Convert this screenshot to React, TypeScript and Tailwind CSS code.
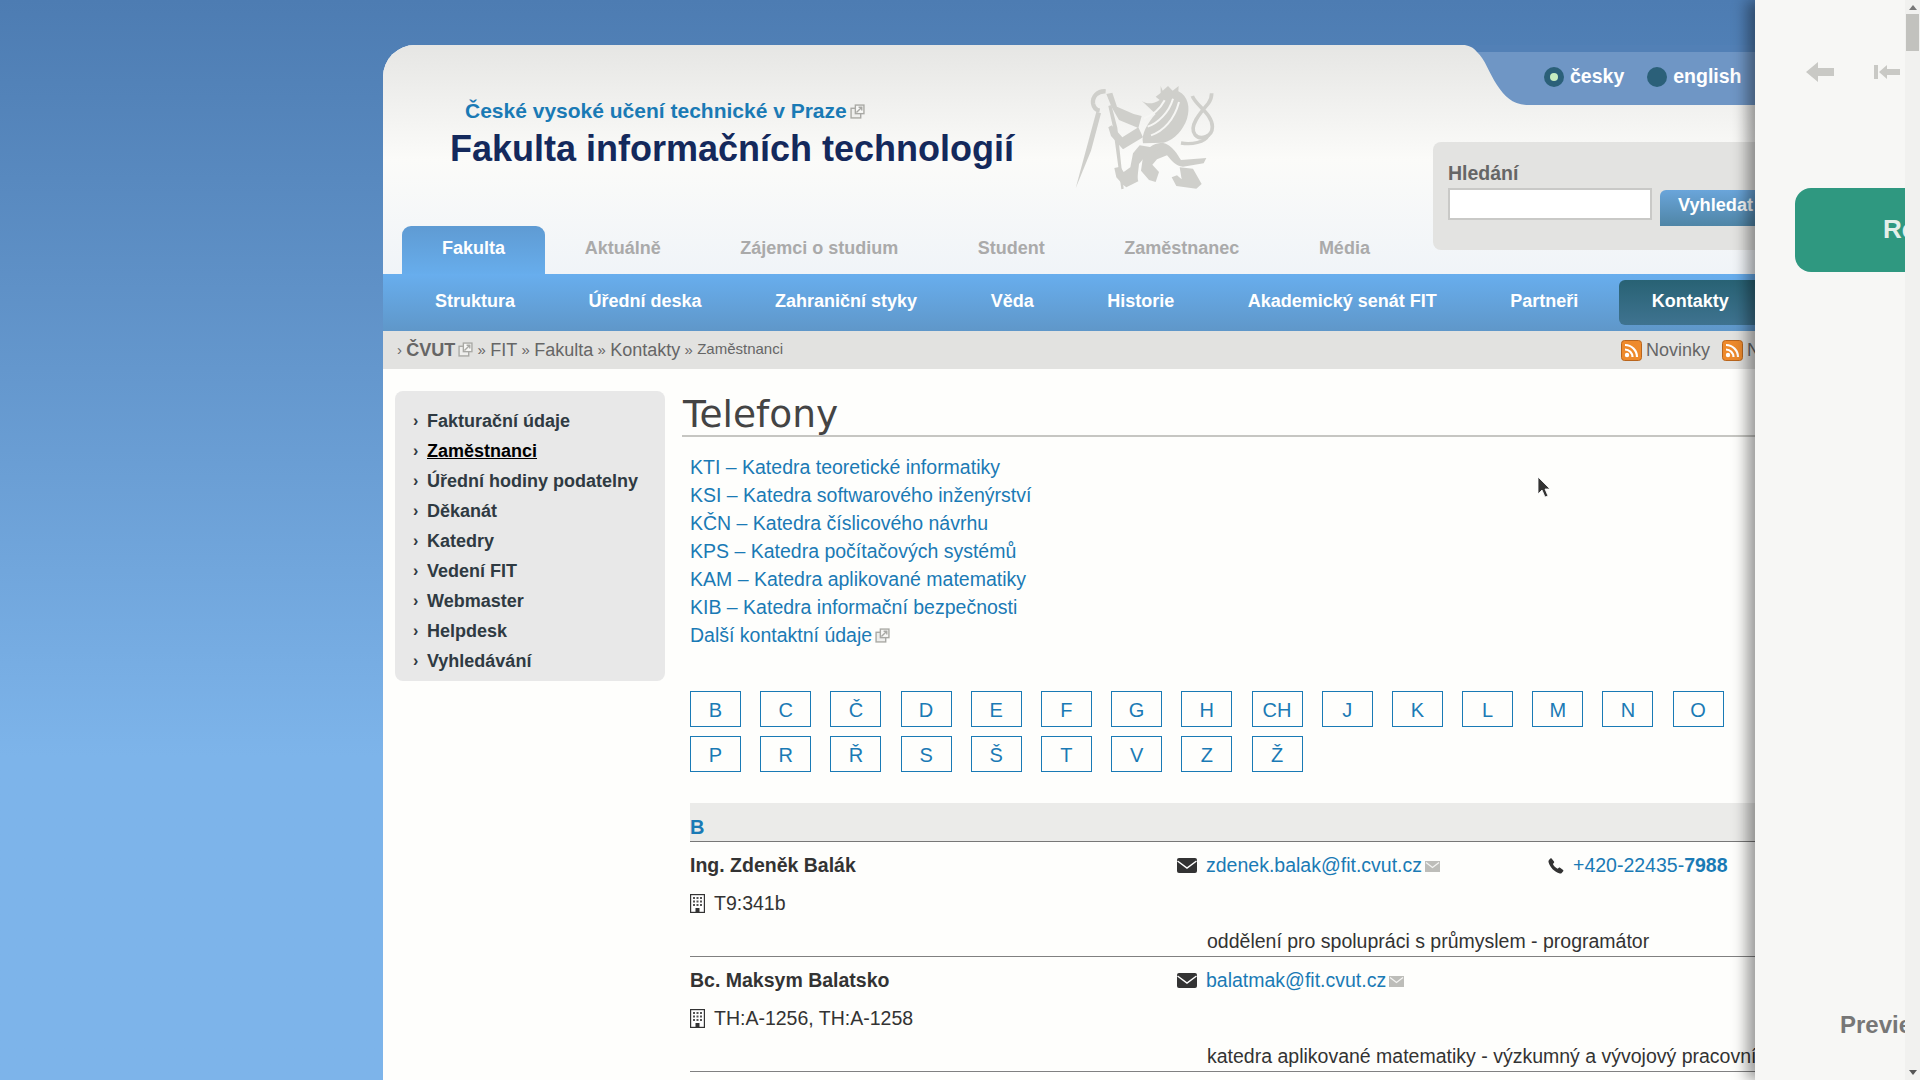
import type { ReactNode } from "react";

const TABS = ["Aktuálně", "Zájemci o studium", "Student", "Zaměstnanec", "Média"];
const SUBNAV = ["Struktura", "Úřední deska", "Zahraniční styky", "Věda", "Historie", "Akademický senát FIT", "Partneři"];
const SIDEBAR = ["Fakturační údaje", "Zaměstnanci", "Úřední hodiny podatelny", "Děkanát", "Katedry", "Vedení FIT", "Webmaster", "Helpdesk", "Vyhledávání"];
const LINKS = [
  "KTI – Katedra teoretické informatiky",
  "KSI – Katedra softwarového inženýrství",
  "KČN – Katedra číslicového návrhu",
  "KPS – Katedra počítačových systémů",
  "KAM – Katedra aplikované matematiky",
  "KIB – Katedra informační bezpečnosti",
];
const LETTERS = ["B", "C", "Č", "D", "E", "F", "G", "H", "CH", "J", "K", "L", "M", "N", "O", "P", "R", "Ř", "S", "Š", "T", "V", "Z", "Ž"];

function ExtIcon() {
  return (
    <svg viewBox="0 0 14 14" className="inline-block w-[15px] h-[15px] ml-[3px] align-[-1px]" fill="none" stroke="#a9a9a5" strokeWidth="1.3">
      <rect x="1" y="4" width="9" height="9" fill="#efefed" />
      <rect x="5" y="1" width="8" height="8" fill="#f8f8f6" />
      <path d="M6 8l5-5M8 3h3v3" />
    </svg>
  );
}

function MailMini() {
  return (
    <svg viewBox="0 0 15 11" className="inline-block w-[15px] h-[11px] ml-[3px]">
      <rect width="15" height="11" fill="#bdbdb9" />
      <path d="M1 1.500l6.500 5 6.500-5" fill="none" stroke="#f4f4f2" strokeWidth="1.300" />
    </svg>
  );
}

function RssIcon() {
  return (
    <svg viewBox="0 0 21 21" className="w-[21px] h-[21px] shrink-0">
      <rect x="0.5" y="0.5" width="20" height="20" rx="3" fill="#ee8a2c" stroke="#b9651d" />
      <circle cx="6" cy="15" r="2.2" fill="#fff" />
      <path d="M4 9.5a7.5 7.5 0 0 1 7.5 7.5M4 5a12 12 0 0 1 12 12" fill="none" stroke="#fff" strokeWidth="2.2" />
    </svg>
  );
}

function EnvelopeIcon() {
  return (
    <svg viewBox="0 0 20 15" className="w-[20px] h-[15px] shrink-0">
      <rect width="20" height="15" rx="2" fill="#333" />
      <path d="M0.5 3L10 10l9.5-7" fill="none" stroke="#fff" strokeWidth="1.5" />
    </svg>
  );
}

function PhoneIcon() {
  return (
    <svg viewBox="0 0 16 16" className="w-[16px] h-[16px] shrink-0" fill="#333">
      <path d="M3.600 0.600L6 3.600c.3.4.3.900 0 1.200L4.900 6.100c.9 1.900 2.600 3.600 4.700 4.700l1.300-1.100c.4-.3.900-.3 1.200 0l3 2.400c.4.3.4.900.1 1.200l-1.500 1.600c-.5.5-1.200.7-1.900.5C6.400 14 1.900 9.400.5 4c-.2-.7 0-1.400.5-1.900L2.400.6c.3-.4.900-.3 1.200 0z" />
    </svg>
  );
}

function BuildingIcon() {
  return (
    <svg viewBox="0 0 15 19" className="w-[15px] h-[19px] shrink-0">
      <rect x="0.6" y="0.6" width="13.800" height="17.800" fill="#fff" stroke="#333" strokeWidth="1.200" />
      <path d="M3 3h2v2H3zM6.500 3h2v2h-2zM10 3h2v2h-2zM3 6.500h2v2H3zM6.500 6.500h2v2h-2zM10 6.500h2v2h-2zM3 10h2v2H3zM6.500 10h2v2h-2zM10 10h2v2h-2z" fill="#555" />
      <rect x="5.500" y="14" width="4" height="5" fill="#333" />
    </svg>
  );
}

function LionLogo() {
  return (
    <svg viewBox="0 0 600 390" className="w-[200px] h-[130px] shrink-0 blur-[0.4px]" fill="#cfcfcb" stroke="none">
      {/* sword */}
      <path d="M80 355L142 125l14 5-30 112z" />
      {/* ring and staff */}
      <path d="M170 64c-24-2-40 16-38 36 2 12 10 20 20 22" fill="none" stroke="#cfcfcb" strokeWidth="13" />
      <path d="M178 108l9-3 18 68 19 183-7 2-25-186z" />
      {/* paws and arms */}
      <path d="M172 72l18-4 14 42 50 22 24 6-10 36-58-24-22-38zM178 172l10-6 32 36 48-30 14 30-60 36-36-40z" />
      {/* crown and head */}
      <path d="M335 48l6 14 16-14 14 14 18-14-2 30-52 4z" />
      <path d="M278 92c16 12 36 10 54-2l-12-10 16-12 52-4c30 14 36 50 26 82-12 34-36 62-70 72l-62 2c-6-28 14-62 38-88z" />
      <path d="M296 170c30-10 64-42 76-84M306 196c36-12 70-46 84-100M285 145c24-8 48-28 62-54" fill="none" stroke="#f6f6f4" strokeWidth="6" />
      {/* hind legs */}
      <path d="M340 218c30 6 46 36 56 52l76-6-8 16-62 10c-20 0-36-20-48-34l-30 12-14 16 20 22-10 30-20-6-24-28 6-42c10-24 28-40 58-42z" />
      <path d="M272 226l62 10-44 22-20 24c-2 22-6 40-2 52l-36 18-10-8-20-22-6-28 18-4 10 16 20-14 8-42z" />
      <path d="M392 292l40 4 26 46-16 14-60-8-14-26 16-6 14 12z" />
      {/* tail */}
      <path d="M430 78c10 28 60 54 60 92 0 30-36 42-52 24-20-24 16-66 40-94 8-10 10-20 10-30" fill="none" stroke="#cfcfcb" strokeWidth="11" />
      <path d="M478 195c-10 22-50 30-82 24" fill="none" stroke="#cfcfcb" strokeWidth="10" />
    </svg>
  );
}

function LangOption({ label, active }: { label: string; active?: boolean }) {
  return (
    <span className="flex items-center gap-[6px] text-[19.500px] font-bold text-white">
      <span className="flex items-center justify-center w-[20px] h-[20px] rounded-full bg-[#2b6079]">
        {active && <span className="w-[8px] h-[8px] rounded-full bg-[#c6ecc0]" />}
      </span>
      {label}
    </span>
  );
}

function Person({ name, room, email, phone, role }: { name: string; room: string; email: string; phone?: ReactNode; role: string }) {
  return (
    <div className="h-[115px] border-b border-[#808080] pt-[9px] flex flex-col gap-[8px] text-[#333] text-[19.500px]">
      <div className="h-[30px] flex items-center">
        <span className="w-[487px] font-bold">{name}</span>
        <span className="flex items-center gap-[9px] w-[371px] text-[#1a7ab5]">
          <EnvelopeIcon />
          <span>{email}<MailMini /></span>
        </span>
        {phone}
      </div>
      <div className="h-[30px] flex items-center gap-[9px]">
        <BuildingIcon />
        {room}
      </div>
      <div className="h-[30px] flex items-center pt-[1px] pl-[517px] whitespace-nowrap">{role}</div>
    </div>
  );
}

export default function App() {
  return (
    <div className="relative flex h-screen overflow-hidden font-['Liberation_Sans',Arial,sans-serif] bg-gradient-to-b from-[#4d7cb2] to-[#7db4ea] to-70%">
      {/* page behind the side panel */}
      <div className="flex-1 min-w-0 overflow-hidden pl-[383px] pt-[45px]">
        <div className="w-[1500px] min-h-[1035px] bg-[#fefefc] rounded-tl-[32px] overflow-hidden">
          {/* header */}
          <header className="relative h-[229px] flex flex-col bg-gradient-to-b from-[#e6e6e4] via-[#fbfbf9] to-[#f0f4f8]">
            <div className="h-[181px] flex">
              <div className="w-[692px] pt-[52px] pl-[67px] whitespace-nowrap">
                <div className="pl-[15px] h-[28px] leading-[28px] text-[21px] font-bold text-[#1a7ab5]">
                  České vysoké učení technické v Praze<ExtIcon />
                </div>
                <div className="mt-[2px] h-[44px] leading-[44px] text-[36px] font-bold text-[#14295c]">
                  Fakulta informačních technologií
                </div>
              </div>
              <div className="pt-[25px] -ml-[26px]"><LionLogo /></div>
            </div>

            <nav className="h-[48px] flex pl-[19px] pb-[4px] text-[18px] font-bold text-[#aaa]">
              <span className="w-[143px] -mb-[4px] pb-[3px] flex items-center justify-center rounded-t-[9px] bg-gradient-to-b from-[#5f9bd3] to-[#67adec] text-white">Fakulta</span>
              {TABS.map((t) => (
                <span key={t} className="px-[39.750px] flex items-center whitespace-nowrap">{t}</span>
              ))}
            </nav>

            {/* language corner */}
            <svg viewBox="0 0 440 60" className="absolute left-[1080px] top-0 w-[440px] h-[60px]">
              <path d="M0 0C5 0 10 2 14 7H440V0z" fill="#5280b6" />
              <path d="M14 7C22 14 26 28 34 40C42 52 50 60 66 60H440V7z" fill="#6f96c5" />
            </svg>
            <div className="absolute left-[1161px] top-[22px] flex gap-[23px] h-[20px] items-center">
              <LangOption label="česky" active />
              <LangOption label="english" />
            </div>

            {/* search */}
            <div className="absolute left-[1050px] top-[97px] w-[400px] h-[108px] rounded-l-[8px] bg-[#e3e3e1] pl-[15px] pt-[20px]">
              <div className="text-[19.500px] font-bold text-[#666] leading-[22px]">Hledání</div>
              <div className="flex gap-[8px] mt-[4px]">
                <div className="w-[204px] h-[32px] bg-white border-2 border-[#c9c9c7]" />
                <div className="h-[36px] mt-[2px] pb-[5px] pl-[18px] pr-[16px] flex items-center rounded-t-[6px] bg-gradient-to-b from-[#6aa5da] to-[#4f85a6] text-[18.200px] font-bold text-white">Vyhledat</div>
              </div>
            </div>
          </header>

          {/* second level nav */}
          <nav className="h-[57px] flex items-center gap-[7.500px] pl-[19px] bg-gradient-to-b from-[#68aeee] to-[#5f97c9] text-[18px] font-bold text-white">
            {SUBNAV.map((s) => (
              <span key={s} className="px-[33px] pb-[3px] whitespace-nowrap">{s}</span>
            ))}
            <span className="h-[45px] flex items-center px-[33px] pb-[2px] rounded-[6px] bg-gradient-to-b from-[#286274] to-[#3f7390]">Kontakty</span>
          </nav>

          {/* breadcrumb */}
          <div className="h-[38px] flex items-center bg-[#e2e2e0] text-[18px] text-[#666] whitespace-nowrap">
            <div className="w-[1238px] pl-[14px] flex items-center gap-[4.300px]">
              <span className="text-[15px]">›</span>
              <span className="font-bold">ČVUT<ExtIcon /></span>
              <span className="text-[15px]">»</span> FIT
              <span className="text-[15px]">»</span> Fakulta
              <span className="text-[15px]">»</span> Kontakty
              <span className="text-[15px]">»</span>
              <span className="text-[15px] -mt-[1px]">Zaměstnanci</span>
            </div>
            <div className="flex items-center gap-[4px]">
              <RssIcon /><span>Novinky</span>
              <span className="w-[4px]" />
              <RssIcon /><span>Novinky</span>
            </div>
          </div>

          <div className="flex pt-[22px] pl-[12px]">
            {/* sidebar */}
            <aside className="w-[270px] h-[290px] shrink-0 rounded-[8px] bg-[#e8e8e8] pt-[15px] text-[18px] font-bold text-[#2f3a42]">
              {SIDEBAR.map((s) => (
                <div key={s} className="h-[30px] flex items-center pl-[18px] gap-[8px] whitespace-nowrap">
                  <span className="w-[6px] text-[16px]">›</span>
                  <span className={s === "Zaměstnanci" ? "text-black underline" : ""}>{s}</span>
                </div>
              ))}
            </aside>

            {/* main column */}
            <main className="flex-1 pl-[17px]">
              <h1 className="-mt-[1px] h-[47px] pl-[1px] leading-[49px] border-b-2 border-[#c6c6c2] font-['DejaVu_Sans',sans-serif] text-[37.500px] text-[#444]">Telefony</h1>
              <div className="pl-[8px] pt-[16px]">
                <ul className="text-[19.500px] leading-[28px] text-[#1a7ab5]">
                  {LINKS.map((l) => <li key={l}>{l}</li>)}
                  <li>Další kontaktní údaje<ExtIcon /></li>
                </ul>

                <div className="mt-[42px] grid grid-cols-[repeat(15,51px)] gap-x-[19.200px] gap-y-[9px]">
                  {LETTERS.map((c) => (
                    <span key={c} className="h-[36px] pt-[2px] flex items-center justify-center border border-[#1a7ab5] text-[20px] text-[#1a7ab5]">{c}</span>
                  ))}
                </div>

                <div className="mt-[31px] h-[39px] pt-[10px] bg-[#ebebe9] border-b border-[#777] text-[20px] leading-[28px] font-bold text-[#1a7ab5]">B</div>
                <Person
                  name="Ing. Zdeněk Balák"
                  room="T9:341b"
                  email="zdenek.balak@fit.cvut.cz"
                  phone={
                    <span className="flex items-center gap-[9px] text-[#1a7ab5]">
                      <PhoneIcon />
                      <span>+420-22435-<b>7988</b></span>
                    </span>
                  }
                  role="oddělení pro spolupráci s průmyslem - programátor"
                />
                <Person
                  name="Bc. Maksym Balatsko"
                  room="TH:A-1256, TH:A-1258"
                  email="balatmak@fit.cvut.cz"
                  role="katedra aplikované matematiky - výzkumný a vývojový pracovník"
                />
              </div>
            </main>
          </div>
        </div>
      </div>

      {/* side panel */}
      <div className="relative z-10 w-[165px] shrink-0 flex bg-[#f7f7f5] shadow-[-8px_0_14px_rgba(0,0,0,0.4)]">
        <div className="w-[150px] overflow-hidden flex flex-col">
          <div className="h-[188px] pt-[62px] pl-[51px] flex gap-[40px] items-start">
            <svg viewBox="0 0 28 20" className="w-[28px] h-[20px] shrink-0" fill="#c9c9c5"><path d="M0 10L12 0v6h16v8H12v6z" /></svg>
            <svg viewBox="0 0 26 14" className="w-[26px] h-[14px] mt-[3px] shrink-0" fill="#c9c9c5"><path d="M0 0h4v14H0zM5 7l8-7v4h13v6H13v4z" /></svg>
          </div>
          <div className="ml-[40px] w-[140px] h-[84px] pb-[2px] shrink-0 rounded-l-[16px] bg-[#2f9880] flex items-center pl-[88px] text-[26px] font-bold text-[#e4efea]">Review</div>
          <div className="mt-[738px] pl-[85px] text-[24px] leading-[30px] font-bold text-[#777] whitespace-nowrap">Preview</div>
        </div>
        <div className="w-[15px] flex flex-col items-center justify-between bg-[#f1f1ef] py-[5px]">
          <div className="flex flex-col items-center gap-[4px]">
            <span className="w-0 h-0 border-x-[4px] border-x-transparent border-b-[5px] border-b-[#777]" />
            <span className="w-[13px] h-[37px] bg-[#c2c2be]" />
          </div>
          <span className="w-0 h-0 border-x-[4px] border-x-transparent border-t-[5px] border-t-[#555]" />
        </div>
      </div>

      {/* mouse pointer */}
      <svg viewBox="0 0 14 22" className="absolute left-[1537px] top-[476px] w-[14px] h-[22px] z-20">
        <path d="M1 1v17l4-4 3 7 3-1-3-7h5z" fill="#333" stroke="#fff" strokeWidth="0.8" />
      </svg>
    </div>
  );
}
